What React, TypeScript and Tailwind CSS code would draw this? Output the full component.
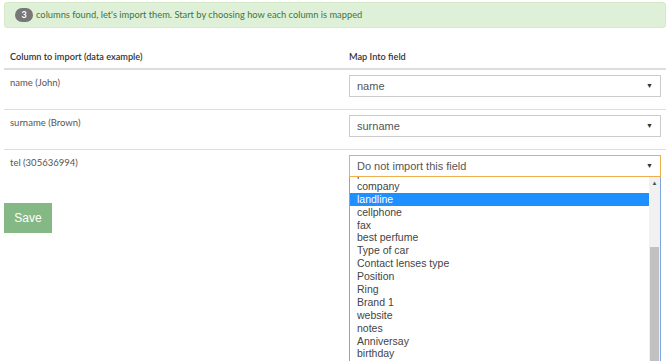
import React from "react";

const rows = [
	{ label: "name (John)", value: "name" },
	{ label: "surname (Brown)", value: "surname" },
	{ label: "tel (305636994)", value: "Do not import this field", open: true },
];

const options = [
	"phone",
	"company",
	"landline",
	"cellphone",
	"fax",
	"best perfume",
	"Type of car",
	"Contact lenses type",
	"Position",
	"Ring",
	"Brand 1",
	"website",
	"notes",
	"Anniversay",
	"birthday",
	"address",
];

function Select({ value, open }: { value: string; open?: boolean }) {
	return (
		<div className="relative">
			<div
				className={`flex h-[22px] items-center justify-between border px-[7px] text-[11px] text-[#555] font-['Liberation_Sans',Arial,sans-serif] ${
					open ? "border-[#f0ad4e]" : "border-[#ccc]"
				}`}
			>
				<span>{value}</span>
				<span className="text-[7px] text-[#333]">▼</span>
			</div>
			{open && (
				<div className="absolute left-0 right-0 top-[22px] z-10 flex h-[186px] overflow-hidden border-x border-[#7ea6e0] bg-white font-['Liberation_Sans',Arial,sans-serif] text-[10.5px] text-[#444]">
					<div className="flex-1 overflow-hidden">
						<div className="mt-[-10px]">
							{options.map((o) => (
								<div
									key={o}
									className={`h-[12.9px] pl-[7px] leading-[12.9px] ${
										o === "landline" ? "bg-[#1e90ff] text-white" : ""
									}`}
								>
									{o}
								</div>
							))}
						</div>
					</div>
					<div className="flex w-[11px] flex-col bg-[#f1f1f1]">
						<div className="flex h-[12px] items-center justify-center text-[6px] text-[#505050]">▲</div>
						<div className="mx-auto mt-[58px] w-[9px] flex-1 bg-[#c1c1c1]" />
					</div>
				</div>
			)}
		</div>
	);
}

export default function App() {
	return (
		<div className="min-h-[361px] bg-white px-[4px] pt-[2px] font-['Lato','Liberation_Sans',sans-serif]">
			<div className="flex h-[26px] items-center rounded-[3px] border border-[#d6e9c6] bg-[#dff0d8] pl-[10px] text-[9.3px] text-[#3c763d]">
				<span className="mr-[3px] inline-flex h-[14px] min-w-[18px] items-center justify-center rounded-full bg-[#777] px-[6px] text-[9px] font-bold text-white">
					3
				</span>
				columns found, let's import them. Start by choosing how each column is mapped
			</div>

			<div className="mt-[18px]">
				<div className="grid h-[24px] grid-cols-[339px_1fr] items-center border-b-2 border-[#ddd] text-[9.2px] font-semibold text-[#333]">
					<div className="px-[6px]">Column to import (data example)</div>
					<div className="px-[6px]">Map Into field</div>
				</div>
				{rows.map((r, i) => (
					<div
						key={r.label}
						className={`grid h-[40px] grid-cols-[339px_1fr] pt-[5px] text-[9.5px] text-[#555] ${
							i < rows.length - 1 ? "border-b border-[#ddd]" : ""
						}`}
					>
						<div className="mt-[2px] px-[6px] leading-[12px]">{r.label}</div>
						<div className="pl-[6px] pr-[5px]">
							<Select value={r.value} open={r.open} />
						</div>
					</div>
				))}
			</div>

			<button className="mt-[13px] h-[30px] w-[48px] bg-[#84b884] text-[12px] text-white font-['Liberation_Sans',Arial,sans-serif]">
				Save
			</button>
		</div>
	);
}
